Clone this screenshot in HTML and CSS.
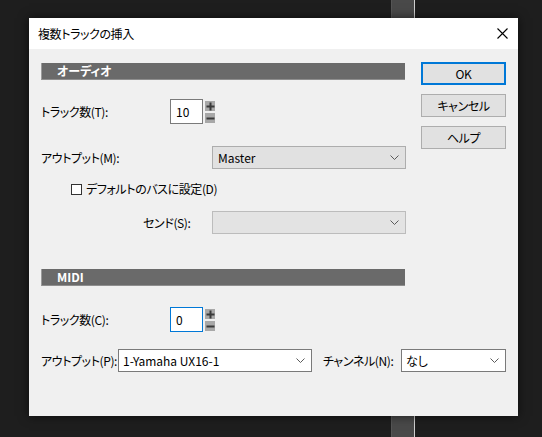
FILE: index.html
```html
<!DOCTYPE html>
<html lang="ja">
<head>
<meta charset="utf-8">
<title>複数トラックの挿入</title>
<link rel="stylesheet" href="styles.css">
</head>
<body>
<div class="desk">
  <div class="deskbar"></div>
  <div class="dialog">
    <div class="titlebar">
      <span class="title">複数トラックの挿入</span>
      <svg class="close" width="11" height="11" viewBox="0 0 11 11"><path d="M0.5 0.5 L10.5 10.5 M10.5 0.5 L0.5 10.5" stroke="#000" stroke-width="1.1" fill="none"/></svg>
    </div>
    <div class="content">
      <div class="top">
        <div class="leftcol">
          <div class="section">オーディオ</div>
          <div class="row row-track">
            <span class="lbl lbl-track">トラック数(T):</span>
            <div class="num">10</div>
            <div class="spinbtns">
              <span class="sb"><svg width="9" height="9" viewBox="0 0 9 9"><path d="M0.5 4.5 H8.5 M4.5 0.5 V8.5" stroke="#3a3a3a" stroke-width="2" fill="none"/></svg></span>
              <span class="sb"><svg width="9" height="9" viewBox="0 0 9 9"><path d="M0.5 4.5 H8.5" stroke="#3a3a3a" stroke-width="2" fill="none"/></svg></span>
            </div>
          </div>
          <div class="row row-out">
            <span class="lbl lbl-out">アウトプット(M):</span>
            <div class="combo combo-gray"><span class="ctext">Master</span><svg class="chev" width="9" height="5" viewBox="0 0 9 5"><path d="M0.5 0.5 L4.5 4.5 L8.5 0.5" stroke="#5a5a5a" stroke-width="1" fill="none"/></svg></div>
          </div>
          <div class="row row-check">
            <span class="checkbox"></span>
            <span class="chklbl">デフォルトのバスに設定(D)</span>
          </div>
          <div class="row row-send">
            <span class="lbl lbl-send">センド(S):</span>
            <div class="combo combo-disabled"><span class="ctext"></span><svg class="chev" width="9" height="5" viewBox="0 0 9 5"><path d="M0.5 0.5 L4.5 4.5 L8.5 0.5" stroke="#5a5a5a" stroke-width="1" fill="none"/></svg></div>
          </div>
        </div>
        <div class="buttons">
          <div class="btn btn-default">OK</div>
          <div class="btn">キャンセル</div>
          <div class="btn">ヘルプ</div>
        </div>
      </div>
      <div class="section section-midi">MIDI</div>
      <div class="row row-mtrack">
        <span class="lbl lbl-track">トラック数(C):</span>
        <div class="num num-focus">0</div>
        <div class="spinbtns">
          <span class="sb"><svg width="9" height="9" viewBox="0 0 9 9"><path d="M0.5 4.5 H8.5 M4.5 0.5 V8.5" stroke="#3a3a3a" stroke-width="2" fill="none"/></svg></span>
          <span class="sb"><svg width="9" height="9" viewBox="0 0 9 9"><path d="M0.5 4.5 H8.5" stroke="#3a3a3a" stroke-width="2" fill="none"/></svg></span>
        </div>
      </div>
      <div class="row row-mout">
        <span class="lbl lbl-mout">アウトプット(P):</span>
        <div class="combo combo-white combo-port"><span class="ctext">1-Yamaha UX16-1</span><svg class="chev" width="9" height="5" viewBox="0 0 9 5"><path d="M0.5 0.5 L4.5 4.5 L8.5 0.5" stroke="#5a5a5a" stroke-width="1" fill="none"/></svg></div>
        <span class="lbl lbl-ch">チャンネル(N):</span>
        <div class="combo combo-white combo-ch"><span class="ctext">なし</span><svg class="chev" width="9" height="5" viewBox="0 0 9 5"><path d="M0.5 0.5 L4.5 4.5 L8.5 0.5" stroke="#5a5a5a" stroke-width="1" fill="none"/></svg></div>
      </div>
    </div>
  </div>
</div>
</body>
</html>
```
FILE: styles.css
```css
* { box-sizing: border-box; }
html, body { margin: 0; padding: 0; }
body {
  background: #1e1e1e;
  font-family: "Noto Sans CJK JP", "Noto Sans", sans-serif;
  font-size: 12px;
  font-feature-settings: "palt";
  letter-spacing: -0.4px;
  color: #000;
}
.desk {
  position: relative;
  width: 542px;
  height: 437px;
  overflow: hidden;
  background: #1e1e1e;
}
.deskbar {
  position: absolute;
  left: 391px;
  top: 0;
  width: 24px;
  height: 437px;
  background: #494949;
  border-left: 1px solid #555;
  border-right: 1px solid #cfcfcf;
}
.dialog {
  position: absolute;
  left: 29px;
  top: 18px;
  width: 489px;
  height: 398px;
  background: #f0f0f0;
  box-shadow: 0 0 10px rgba(0,0,0,0.6);
  display: flex;
  flex-direction: column;
}
.titlebar {
  height: 31px;
  background: #fff;
  display: flex;
  align-items: center;
  padding-left: 9px;
  padding-right: 10px;
  flex: none;
}
.title { flex: 1; line-height: 1; white-space: nowrap; }
.close { display: block; }
.content {
  padding: 13px 0 0 12px;
  flex: 1;
}
.top { display: flex; }
.leftcol { width: 365px; }
.buttons {
  margin-left: 15px;
  width: 85px;
  display: flex;
  flex-direction: column;
  gap: 9px;
}
.btn {
  height: 23px;
  background: #e1e1e1;
  border: 1px solid #adadad;
  display: flex;
  align-items: center;
  justify-content: center;
  line-height: 1;
  white-space: nowrap;
}
.btn-default { border: 2px solid #0078d7; }
.section {
  margin-top: 1px;
  width: 364px;
  height: 17px;
  background: #6a6a6a;
  border-left: 1px solid #9b9b9b;
  border-bottom: 1px solid #8e8e8e;
  color: #fff;
  font-weight: bold;
  padding-left: 15px;
  display: flex;
  align-items: center;
  line-height: 1;
  letter-spacing: 0;
}
.section-midi { margin-top: 35px; }
.row { display: flex; align-items: center; }
.lbl { flex: none; line-height: 1; white-space: nowrap; }
.row-track { margin-top: 19px; height: 25px; }
.lbl-track { width: 129px; }
.num {
  width: 33px;
  height: 25px;
  background: #fff;
  border: 1px solid #7a7a7a;
  padding-left: 5px;
  display: flex;
  align-items: center;
  line-height: 1;
  letter-spacing: 0;
}
.num-focus { border-color: #0078d7; }
.spinbtns {
  margin-left: 2px;
  display: flex;
  flex-direction: column;
  gap: 2px;
  align-self: flex-start;
  padding-top: 2px;
}
.sb {
  width: 10px;
  height: 10px;
  background: #a8a8a8;
  display: flex;
  align-items: center;
  justify-content: center;
}
.sb svg { display: block; }
.row-out { margin-top: 22px; height: 23px; }
.lbl-out { width: 171px; }
.combo {
  height: 23px;
  display: flex;
  align-items: center;
  padding-left: 5px;
  padding-right: 6px;
  line-height: 1;
  white-space: nowrap;
  letter-spacing: 0;
}
.combo .ctext { flex: 1; }
.chev { display: block; }
.combo-gray { width: 194px; background: #e1e1e1; border: 1px solid #adadad; }
.combo-disabled { width: 194px; background: #e3e3e3; border: 1px solid #bcbcbc; }
.combo-white { background: #fff; border: 1px solid #7a7a7a; }
.row-check { margin-top: 14px; height: 12px; padding-left: 30px; }
.checkbox {
  width: 11px;
  height: 11px;
  border: 1px solid #333;
  background: #fff;
  flex: none;
}
.chklbl { margin-left: 4px; line-height: 1; white-space: nowrap; }
.row-send { margin-top: 16px; height: 23px; padding-left: 102px; }
.lbl-send { width: 69px; }
.row-mtrack { margin-top: 21px; height: 25px; }
.row-mout { margin-top: 17px; height: 23px; }
.lbl-mout { width: 77px; }
.combo-port { width: 194px; padding-left: 4px; }
.lbl-ch { margin-left: 11px; width: 78px; }
.combo-ch { width: 105px; padding-left: 4px; }
```
